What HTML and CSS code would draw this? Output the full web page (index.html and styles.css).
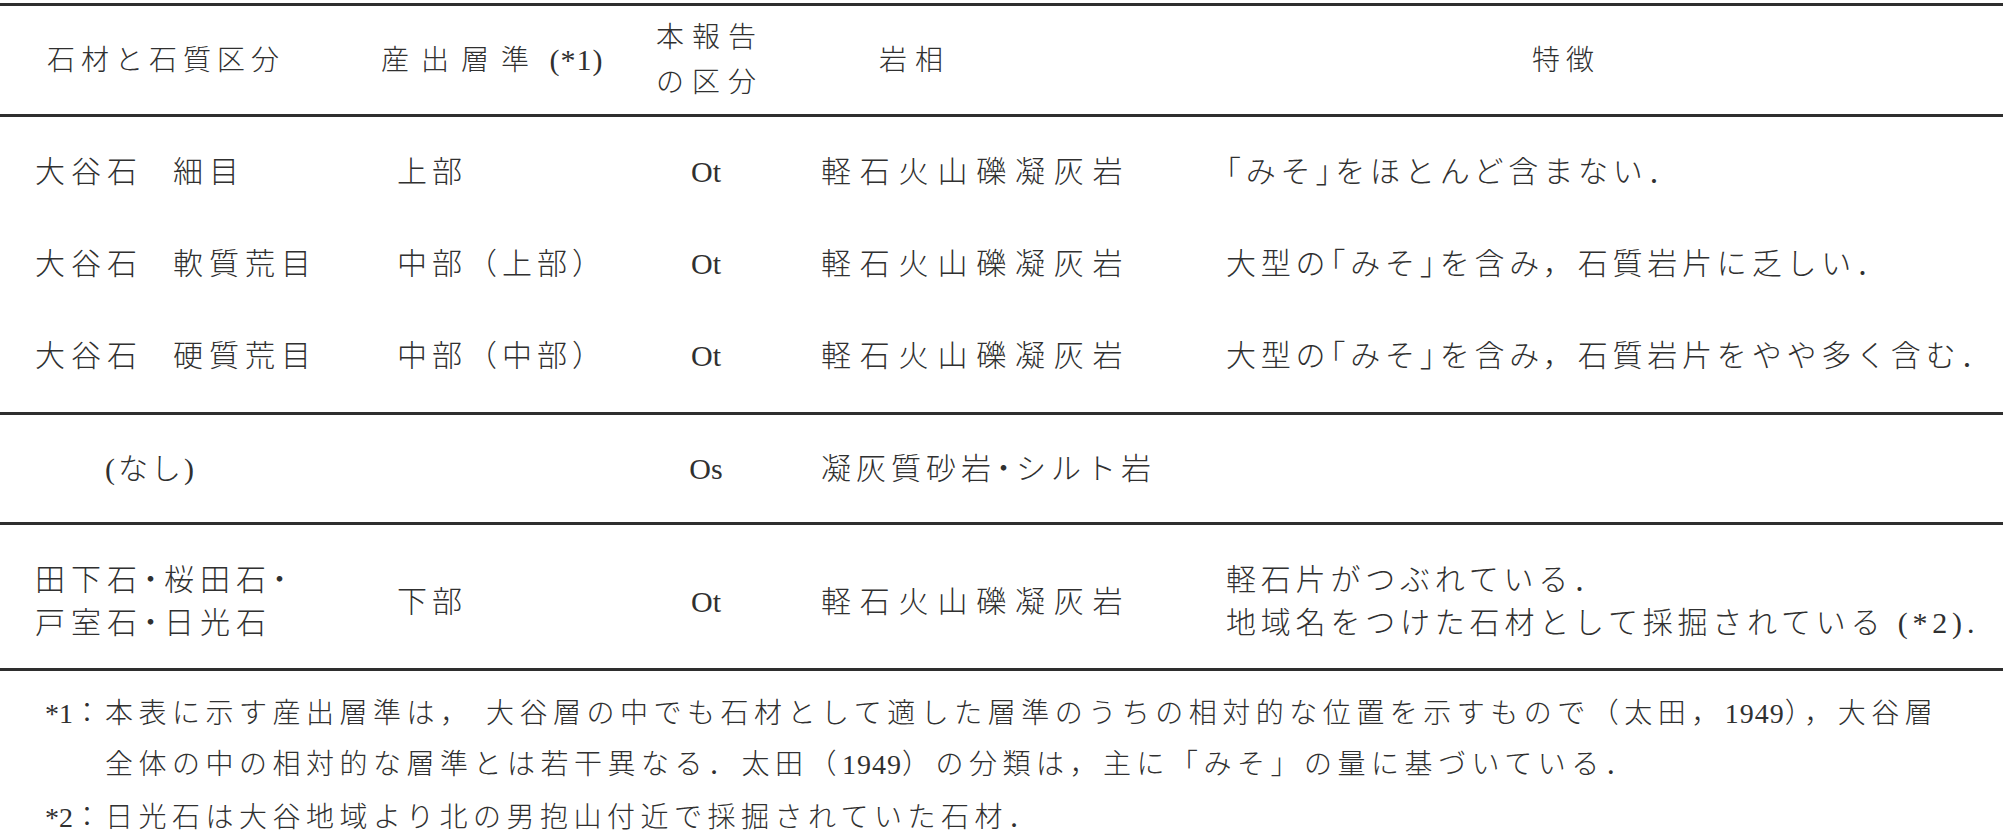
FILE: index.html
```html
<!DOCTYPE html>
<html lang="ja">
<head>
<meta charset="utf-8">
<title>大谷石の石材と石質区分</title>
<link rel="stylesheet" href="styles.css">
</head>
<body>
<table class="tbl">
  <colgroup>
    <col class="c1"><col class="c2"><col class="c3"><col class="c4"><col class="c5">
  </colgroup>
  <thead>
    <tr>
      <th class="h1">石材と石質区分</th>
      <th class="h2">産出層準<span class="lat"> (*1)</span></th>
      <th class="h3">本報告<br>の区分</th>
      <th class="h4">岩相</th>
      <th class="h5">特徴</th>
    </tr>
  </thead>
  <tbody class="sec1">
    <tr class="first">
      <td class="d1">大谷石<span class="gap">　</span>細目</td>
      <td class="d2">上部</td>
      <td class="d3">Ot</td>
      <td class="d4">軽石火山礫凝灰岩</td>
      <td class="d5"><span class="hw">「</span>みそ<span class="hw">」</span>をほとんど含まない．</td>
    </tr>
    <tr>
      <td class="d1">大谷石<span class="gap">　</span>軟質荒目</td>
      <td class="d2">中部（上部）</td>
      <td class="d3">Ot</td>
      <td class="d4">軽石火山礫凝灰岩</td>
      <td class="d5">大型の<span class="hw">「</span>みそ<span class="hw">」</span>を含み，石質岩片に乏しい．</td>
    </tr>
    <tr class="last">
      <td class="d1">大谷石<span class="gap">　</span>硬質荒目</td>
      <td class="d2">中部（中部）</td>
      <td class="d3">Ot</td>
      <td class="d4">軽石火山礫凝灰岩</td>
      <td class="d5">大型の<span class="hw">「</span>みそ<span class="hw">」</span>を含み，石質岩片をやや多く含む．</td>
    </tr>
  </tbody>
  <tbody class="sec2">
    <tr>
      <td class="d1 none">(なし)</td>
      <td class="d2"></td>
      <td class="d3">Os</td>
      <td class="d4 tight">凝灰質砂岩<span class="hw">・</span>シルト岩</td>
      <td class="d5"></td>
    </tr>
  </tbody>
  <tbody class="sec3">
    <tr>
      <td class="d1">田下石<span class="hw">・</span>桜田石<span class="hw">・</span><br>戸室石<span class="hw">・</span>日光石</td>
      <td class="d2">下部</td>
      <td class="d3">Ot</td>
      <td class="d4">軽石火山礫凝灰岩</td>
      <td class="d5">軽石片がつぶれている．<br>地域名をつけた石材として採掘されている (*2).</td>
    </tr>
  </tbody>
</table>
<div class="notes">
  <div class="note">
    <span class="mark">*1：</span>
    <span class="ntext">本表に示す産出層準は， 大谷層の中でも石材として適した層準のうちの相対的な位置を示すもので（太田，<span class="num">1949</span>），大谷層<br>全体の中の相対的な層準とは若干異なる．太田（<span class="num">1949</span>）の分類は，主に「みそ」の量に基づいている．</span>
  </div>
  <div class="note second">
    <span class="mark">*2：</span>
    <span class="ntext">日光石は大谷地域より北の男抱山付近で採掘されていた石材．</span>
  </div>
</div>
</body>
</html>
```

FILE: styles.css
```css
html, body {
  margin: 0;
  padding: 0;
  background: #ffffff;
}

body {
  width: 2003px;
  height: 831px;
  overflow: hidden;
  color: #303030;
  font-family: "Liberation Serif", "Noto Sans CJK JP", serif;
  font-weight: 300;
}

.tbl {
  width: 2003px;
  border-collapse: collapse;
  margin-top: 3px;
  table-layout: fixed;
}

.c1 { width: 370px; }
.c2 { width: 270px; }
.c3 { width: 132px; }
.c4 { width: 418px; }
.c5 { width: 813px; }

.tbl thead tr {
  border-top: 3px solid #2e2e2e;
  border-bottom: 3px solid #2e2e2e;
}

.tbl tbody {
  border-bottom: 3px solid #2e2e2e;
}

.tbl th {
  height: 108px;
  padding: 0;
  font-size: 28px;
  font-weight: 300;
  line-height: 45px;
  text-align: left;
  vertical-align: middle;
  white-space: nowrap;
}

.h1 { padding-left: 47px !important; letter-spacing: 6px; }
.h2 { padding-left: 11px !important; letter-spacing: 12px; }
.h2 .lat { font-size: 30px; letter-spacing: 1px; }
.h3 { text-align: center !important; letter-spacing: 8px; padding-left: 8px !important; }
.h4 { padding-left: 107px !important; letter-spacing: 8px; }
.h5 { padding-left: 342px !important; letter-spacing: 6px; }

.tbl td {
  padding: 26px 0;
  font-size: 30px;
  line-height: 40px;
  vertical-align: middle;
  white-space: nowrap;
}

.tbl tr.first td { padding-top: 35px; }
.tbl tr.last td { padding-bottom: 36px; }

.sec2 td { padding-top: 34px !important; padding-bottom: 33px !important; }
.sec3 td { padding-top: 33px !important; padding-bottom: 24px !important; line-height: 43px; }

.hw { font-feature-settings: "halt" 1; }
.gap { letter-spacing: 0; }

.d1 { padding-left: 35px !important; letter-spacing: 6px; }
.d1.none { padding-left: 105px !important; letter-spacing: 3px; }
.d2 { padding-left: 27px !important; letter-spacing: 5px; }
.d3 { text-align: center; font-size: 34px; }
.d4 { padding-left: 49px !important; letter-spacing: 8.8px; }
.d4.tight { letter-spacing: 5px; }
.d5 { padding-left: 36px !important; letter-spacing: 4.8px; }

.notes {
  margin-top: 17px;
  font-size: 28px;
  line-height: 51px;
}

.note {
  display: flex;
  padding-left: 45px;
  white-space: nowrap;
}

.note.second {
  margin-top: 2px;
}

.mark {
  width: 60px;
  flex: none;
}

.ntext {
  letter-spacing: 5.5px;
}

.num {
  letter-spacing: 1px;
}
```
